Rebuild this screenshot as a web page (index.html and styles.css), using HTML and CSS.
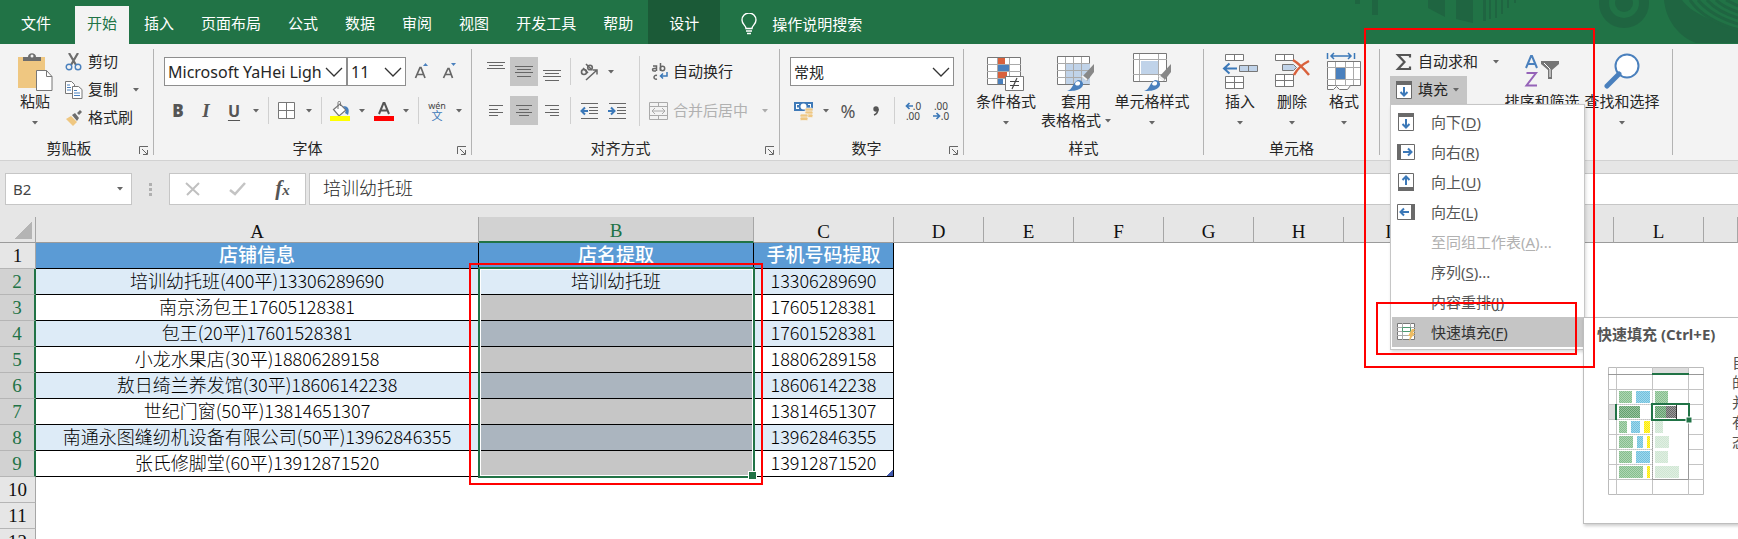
FILE: index.html
```html
<!DOCTYPE html>
<html lang="zh-CN">
<head>
    <meta charset="UTF-8">
    <meta name="viewport" content="width=device-width, initial-scale=1.0">
    <title>Excel</title>
    <link rel="stylesheet" href="styles.css">
</head>
<body>
    <!-- Общие значки -->
    <svg class="symbols" aria-hidden="true">
        <symbol id="caret" viewBox="0 0 6 4"><path d="M0 0h6L3 3.5z" fill="#666"/></symbol>
        <symbol id="chevron" viewBox="0 0 18 10"><path d="M1 1l8 8 8-8" fill="none" stroke="#333" stroke-width="1.3"/></symbol>
        <symbol id="launcher" viewBox="0 0 10 9"><path d="M.5 8V.5H9M3 3l5 5M8.5 4v4.5H4" fill="none" stroke="#666"/></symbol>
        <symbol id="fill-down" viewBox="0 0 18 18"><path d="M1.500 .5h15v17h-15z" fill="#fff" stroke="#6a6a6a"/><path d="M1 0h16v4H1z" fill="#6a6a6a"/><path d="M9 6v8M5.500 11L9 14.500l3.500-3.500" fill="none" stroke="#3b78b8" stroke-width="2"/></symbol>
    </svg>

    <header class="tabs">
        <svg class="tabs-art" viewBox="0 0 398 44" aria-hidden="true">
            <g fill="#1f6541">
                <path d="M15 0h5v4h-5zM32 0h6v15h-6zM88 0h17v17l-17-9zM116 0h17v23l-17-4zM143 0h3v21h-3zM149 0h2v19h-2zM155 0h2v18h-2zM161 0h2v14h-2zM167 0h2v8h-2zM174 0h2v3h-2z"/>
                <path d="M324 0c2 20 14 36 32 43h42V28C376 24 350 12 342 0z"/>
            </g>
            <circle cx="284" cy="3" r="20" fill="none" stroke="#1f6541" stroke-width="10"/>
            <circle cx="284" cy="3" r="9" fill="#1f6541"/>
            <path d="M350 0c10 15 28 24 48 30M358 0c10 12 24 19 40 24M367 0c8 9 18 14 31 18M376 0c6 6 13 9 22 12M386 0l12 6" fill="none" stroke="#1f6541" stroke-width="3"/>
        </svg>
        <nav class="tab-list">
            <button class="tab tab-file">文件</button>
            <button class="tab active">开始</button>
            <button class="tab">插入</button>
            <button class="tab">页面布局</button>
            <button class="tab">公式</button>
            <button class="tab">数据</button>
            <button class="tab">审阅</button>
            <button class="tab">视图</button>
            <button class="tab">开发工具</button>
            <button class="tab">帮助</button>
            <button class="tab tab-context">设计</button>
        </nav>
        <label class="tell-me">
            <svg width="16" height="22" viewBox="0 0 16 22"><path d="M5 15.500c0-3-4-4-4-8.500a7 7 0 0 1 14 0c0 4.500-4 5.500-4 8.500zM5 18h6M6 20.500h4" fill="none" stroke="#fff" stroke-width="1.400"/></svg>
            <input type="text" placeholder="操作说明搜索" aria-label="操作说明搜索">
        </label>
    </header>

    <section class="ribbon">
        <div class="group group-clipboard">
            <div class="group-body">
                <button class="big">
                    <svg width="36" height="40" viewBox="0 0 36 40"><path d="M1 5h27v31H1z" fill="#efc781"/><path d="M6 9V5h5c0-5 8-5 8 0h5v4z" fill="#6d6d6d"/><circle cx="15" cy="4" r="1.500" fill="#f3f3f3"/><path d="M19.500 18.500h10l5.500 6v14H19.500z" fill="#fff" stroke="#777"/><path d="M29.500 18.500v6H35" fill="none" stroke="#777"/></svg>
                    <span>粘贴</span>
                    <svg class="caret"><use href="#caret"/></svg>
                </button>
                <div class="stack">
                    <button class="small">
                        <svg width="18" height="18" viewBox="0 0 18 18"><path d="M4 0l7 12M13 0L6 12" stroke="#6d6d6d" stroke-width="2.200"/><circle cx="4" cy="14" r="2.800" fill="none" stroke="#4a80bd" stroke-width="1.400"/><circle cx="13" cy="14" r="2.800" fill="none" stroke="#4a80bd" stroke-width="1.400"/></svg>
                        <span>剪切</span>
                    </button>
                    <button class="small">
                        <svg width="18" height="18" viewBox="0 0 18 18"><path d="M.5.5h6l3 3v9h-9z" fill="#fff" stroke="#777"/><path d="M7.500 5.500h6l3.500 3v9H7.500z" fill="#fff" stroke="#777"/><path d="M2 4h3M2 6.500h4M2 9h4M9 9.500h3M9 12h6M9 14.500h6" stroke="#4a80bd"/></svg>
                        <span>复制</span>
                        <svg class="caret caret-far"><use href="#caret"/></svg>
                    </button>
                    <button class="small">
                        <svg width="18" height="18" viewBox="0 0 18 18"><path d="M1 10l5-3 6 6-4 4z" fill="#efc781"/><path d="M7 6l3-2 4 5-2 3zM12 4l3-3 2 2-3 3z" fill="#6d6d6d"/></svg>
                        <span>格式刷</span>
                    </button>
                </div>
            </div>
            <footer class="group-foot"><span>剪贴板</span><button class="launch" aria-label="剪贴板选项"><svg width="10" height="9"><use href="#launcher"/></svg></button></footer>
        </div>

        <div class="group group-font">
            <div class="group-body rows">
                <div class="row">
                    <label class="pick pick-font"><select aria-label="字体"><option>Microsoft YaHei Ligh</option></select><svg width="18" height="10"><use href="#chevron"/></svg></label>
                    <label class="pick pick-size"><select aria-label="字号"><option>11</option></select><svg width="18" height="10"><use href="#chevron"/></svg></label>
                    <button class="tool" aria-label="增大字号"><svg width="16" height="18" viewBox="0 0 16 18"><path d="M1.500 15L6 4.500h1L11 15M3 11.500h7" fill="none" stroke="#666" stroke-width="1.700"/><path d="M9 3l2.500-3L14 3z" fill="#4a80bd"/></svg></button>
                    <button class="tool" aria-label="减小字号"><svg width="16" height="18" viewBox="0 0 16 18"><path d="M1.500 15L6 5.500h1L10.500 15M3 11.500h6" fill="none" stroke="#666" stroke-width="1.700"/><path d="M9 0l2.500 3L14 0z" fill="#4a80bd"/></svg></button>
                </div>
                <div class="row">
                    <button class="tool letter"><b>B</b></button>
                    <button class="tool letter"><i>I</i></button>
                    <button class="tool letter"><u>U</u></button>
                    <button class="drop" aria-label="下划线"><svg class="caret"><use href="#caret"/></svg></button>
                    <span class="sep"></span>
                    <button class="tool" aria-label="边框"><svg width="18" height="18" viewBox="0 0 18 18"><path d="M.5.500h16v16H.5zM8.500.500v16M.5 8.500h16" fill="#fff" stroke="#777"/></svg></button>
                    <button class="drop" aria-label="边框样式"><svg class="caret"><use href="#caret"/></svg></button>
                    <span class="sep"></span>
                    <button class="tool" aria-label="填充颜色"><svg width="20" height="20" viewBox="0 0 20 20"><path d="M3.500 8.500L10 3l6 6-7 6z" fill="#fff" stroke="#777" stroke-width="1.200"/><path d="M8 8V1.500c0-1.500 2.500-1.500 2.500 0V5" fill="none" stroke="#777"/><path d="M13 5c5 0 7 3 5 9l-3-2 1-3z" fill="#4a80bd"/><path d="M0 15h20v5H0z" fill="#ff0"/></svg></button>
                    <button class="drop" aria-label="选择填充颜色"><svg class="caret"><use href="#caret"/></svg></button>
                    <button class="tool" aria-label="字体颜色"><svg width="20" height="20" viewBox="0 0 20 20"><path d="M5 13L9.500 2h1L15 13M6.500 9.500h7" fill="none" stroke="#555" stroke-width="2"/><path d="M0 15h20v5H0z" fill="red"/></svg></button>
                    <button class="drop" aria-label="选择字体颜色"><svg class="caret"><use href="#caret"/></svg></button>
                    <span class="sep"></span>
                    <button class="tool pinyin"><span>wén</span><span class="wen">文</span></button>
                    <button class="drop" aria-label="拼音设置"><svg class="caret"><use href="#caret"/></svg></button>
                </div>
            </div>
            <footer class="group-foot"><span>字体</span><button class="launch" aria-label="字体设置"><svg width="10" height="9"><use href="#launcher"/></svg></button></footer>
        </div>

        <div class="group group-align">
            <div class="group-body">
                <div class="rows">
                    <div class="row">
                        <button class="tool" aria-label="顶端对齐"><svg width="18" height="20" viewBox="0 0 18 20"><path d="M0 .5h18M2 3.500h14M0 6.500h18" stroke="#666"/></svg></button>
                        <button class="tool on" aria-label="垂直居中"><svg width="18" height="20" viewBox="0 0 18 20"><path d="M0 4.500h18M2 7.500h14M0 10.500h18M2 14.500h14" stroke="#666"/></svg></button>
                        <button class="tool" aria-label="底端对齐"><svg width="18" height="20" viewBox="0 0 18 20"><path d="M0 8.500h18M2 11.500h14M0 14.500h18M2 18.500h14" stroke="#666"/></svg></button>
                        <span class="sep"></span>
                        <button class="tool" aria-label="方向"><svg width="20" height="20" viewBox="0 0 20 20"><g fill="none" stroke="#666" stroke-width="1.600"><circle cx="5" cy="10" r="2.500"/><path d="M4 6l5 5M7 2l6 6"/><circle cx="11" cy="5.500" r="2.300"/></g><path d="M7 18L18 8M13.500 8H18v4.500" fill="none" stroke="#666" stroke-width="1.500"/></svg></button>
                        <button class="drop" aria-label="方向选项"><svg class="caret"><use href="#caret"/></svg></button>
                    </div>
                    <div class="row">
                        <button class="tool" aria-label="左对齐"><svg width="18" height="20" viewBox="0 0 18 20"><path d="M2 4.500h14M2 8.500h9M2 11.500h14M2 14.500h9" stroke="#666"/></svg></button>
                        <button class="tool on" aria-label="居中"><svg width="18" height="20" viewBox="0 0 18 20"><path d="M1 4.500h16M4 8.500h10M1 11.500h16M4 14.500h10" stroke="#666"/></svg></button>
                        <button class="tool" aria-label="右对齐"><svg width="18" height="20" viewBox="0 0 18 20"><path d="M2 4.500h14M7 8.500h9M2 11.500h14M7 14.500h9" stroke="#666"/></svg></button>
                        <span class="sep"></span>
                        <button class="tool" aria-label="减少缩进"><svg width="18" height="18" viewBox="0 0 18 18"><path d="M1 1.500h17M9 5.500h9M9 8.500h9M9 11.500h9M1 16.500h17" stroke="#666"/><path d="M8 9H2M5 5.500L1.500 9 5 12.500" fill="none" stroke="#3b78b8" stroke-width="2"/></svg></button>
                        <button class="tool" aria-label="增加缩进"><svg width="18" height="18" viewBox="0 0 18 18"><path d="M1 1.500h17M9 5.500h9M9 8.500h9M9 11.500h9M1 16.500h17" stroke="#666"/><path d="M0 9h6M3 5.500L6.500 9 3 12.500" fill="none" stroke="#3b78b8" stroke-width="2"/></svg></button>
                    </div>
                </div>
                <span class="sep sep-long"></span>
                <div class="rows rows-text">
                    <button class="small">
                        <svg width="20" height="20" viewBox="0 0 20 20"><g fill="none" stroke="#666" stroke-width="1.500"><path d="M4 4h3.500v5M7 6.500H5c-2 0-2 2.500 0 2.500h2M11.500 1v8M15.500 13"/><circle cx="13.500" cy="6.500" r="2.200"/><path d="M8 13.500c-4-1-4 4.500 0 3.500"/></g><path d="M18 10v4h-6M14 11.500L11.500 14l2.500 2.500" fill="none" stroke="#3b78b8" stroke-width="1.500"/></svg>
                        <span>自动换行</span>
                    </button>
                    <button class="small" disabled>
                        <svg width="20" height="20" viewBox="0 0 20 20"><path d="M.5 1.500h18v17H.5zM.5 5.500h18M.5 14.500h18M9.500 1.500v4M9.500 14.500v4M3 10h13M6 7l-3 3 3 3M13 7l3 3-3 3" fill="none" stroke="#aaa"/></svg>
                        <span>合并后居中</span>
                        <svg class="caret caret-far"><use href="#caret"/></svg>
                    </button>
                </div>
            </div>
            <footer class="group-foot"><span>对齐方式</span><button class="launch" aria-label="对齐设置"><svg width="10" height="9"><use href="#launcher"/></svg></button></footer>
        </div>

        <div class="group group-number">
            <div class="group-body rows">
                <div class="row">
                    <label class="pick pick-number"><select aria-label="数字格式"><option>常规</option></select><svg width="18" height="10"><use href="#chevron"/></svg></label>
                </div>
                <div class="row">
                    <button class="tool" aria-label="会计数字格式"><svg width="20" height="20" viewBox="0 0 20 20"><path d="M0 1h19v9H0z" fill="#3f7ab8"/><path d="M2 3h3v1H3v2.500h2V8H2zM17 3h-3v1h2v2.500h1z" fill="#fff"/><circle cx="9.500" cy="5.500" r="3" fill="#fff"/><g fill="#efc781" stroke="#f3f3f3" stroke-width=".7"><rect x="11" y="7" width="8" height="3.500" rx="1.500"/><rect x="11" y="10" width="8" height="3.500" rx="1.500"/><rect x="11" y="13" width="8" height="3.500" rx="1.500"/><rect x="6" y="13" width="8" height="3.500" rx="1.500"/><rect x="6" y="16" width="8" height="3.500" rx="1.500"/></g></svg></button>
                    <button class="drop" aria-label="货币"><svg class="caret"><use href="#caret"/></svg></button>
                    <button class="tool percent">%</button>
                    <button class="tool comma" aria-label="千位分隔样式"><svg width="8" height="10" viewBox="0 0 8 10"><circle cx="4" cy="3" r="2.700" fill="#555"/><path d="M6 3c0 3-1 5-4 6" fill="none" stroke="#555" stroke-width="1.600"/></svg></button>
                    <span class="sep"></span>
                    <button class="tool decimals"><span><svg width="8" height="8" viewBox="0 0 8 8"><path d="M8 4H2M4.500 1l-3 3 3 3" fill="none" stroke="#3b78b8" stroke-width="1.700"/></svg>.0</span><span>.00</span></button>
                    <button class="tool decimals"><span>.00</span><span><svg width="8" height="8" viewBox="0 0 8 8"><path d="M0 4h6M3.500 1l3 3-3 3" fill="none" stroke="#3b78b8" stroke-width="1.700"/></svg>.0</span></button>
                </div>
            </div>
            <footer class="group-foot"><span>数字</span><button class="launch" aria-label="数字设置"><svg width="10" height="9"><use href="#launcher"/></svg></button></footer>
        </div>

        <div class="group group-styles">
            <div class="group-body">
                <button class="big">
                    <svg width="38" height="40" viewBox="0 0 38 40"><path d="M.5 5.500h33v27H.5z" fill="#fff" stroke="#777"/><path d="M0 12.500h34M0 19.500h34M0 26.500h34M10.500 6v26M22.500 6v26" stroke="#aaa"/><path d="M11 6h7v6h-7zM11 20h9v6h-9z" fill="#d9613c"/><path d="M11 13h11v6H11zM11 27h5v5h-5z" fill="#4a80bd"/><path d="M18.500 24.500h18v14h-18z" fill="#fff" stroke="#777"/><path d="M23 29.500h9M23 33.500h9M30 26l-5 11" stroke="#444" stroke-width="1.200"/></svg>
                    <span>条件格式</span>
                    <svg class="caret"><use href="#caret"/></svg>
                </button>
                <button class="big">
                    <svg width="38" height="40" viewBox="0 0 38 40"><path d="M.5 4.500h32v28H.5z" fill="#fff" stroke="#777"/><path d="M9 12h24v20H9z" fill="#c0d3e9"/><path d="M0 11.500h33M0 18.500h33M0 25.500h33M8.500 5v27M16.500 5v27M24.500 5v27" stroke="#aaa"/><path d="M37 12v8l-7 9-5-4z" fill="#888"/><path d="M25 24l5 4" stroke="#f3f3f3" stroke-width="2"/><path d="M10 39c6-1 5-8 11-11 5 0 7 5 3 8-4 3-9 3-14 3z" fill="#4a80bd"/><path d="M18 32c1-4 6-3 5 0-1 2-4 2-5 0z" fill="#fff"/></svg>
                    <span>套用</span>
                    <span class="with-caret">表格格式<svg class="caret"><use href="#caret"/></svg></span>
                </button>
                <button class="big">
                    <svg width="38" height="40" viewBox="0 0 38 40"><path d="M.5 1.500h33v28H.5z" fill="#fff" stroke="#777"/><path d="M0 7.500h34M0 22.500h34M6.500 2v27M25.500 2v27" stroke="#aaa"/><path d="M8 9h17v13H8z" fill="#c0d3e9"/><path d="M38 12v8l-7 9-5-4z" fill="#888"/><path d="M26 24l5 4" stroke="#f3f3f3" stroke-width="2"/><path d="M11 39c6-1 5-8 11-11 5 0 7 5 3 8-4 3-9 3-14 3z" fill="#4a80bd"/><path d="M19 32c1-4 6-3 5 0-1 2-4 2-5 0z" fill="#fff"/></svg>
                    <span>单元格样式</span>
                    <svg class="caret"><use href="#caret"/></svg>
                </button>
            </div>
            <footer class="group-foot"><span>样式</span></footer>
        </div>

        <div class="group group-cells">
            <div class="group-body">
                <button class="big">
                    <svg width="36" height="40" viewBox="0 0 36 40"><path d="M3.500 2.500h18v6h-18zM12.500 2.500v6M3.500 24.500h18v12h-18zM3.500 30.500h18M12.500 24.500v12" fill="#fff" stroke="#777"/><path d="M17.500 13.500h18v6h-18zM26.500 13.500v6" fill="#c0d3e9" stroke="#777"/><path d="M15 16.500H2M7.500 11.500l-5.500 5 5.500 5" fill="none" stroke="#3b78b8" stroke-width="2"/></svg>
                    <span>插入</span>
                    <svg class="caret"><use href="#caret"/></svg>
                </button>
                <button class="big">
                    <svg width="36" height="40" viewBox="0 0 36 40"><path d="M1.500 2.500h18v6h-18zM10.500 2.500v6M1.500 22.500h18v12h-18zM1.500 28.500h18M10.500 22.500v12" fill="#fff" stroke="#777"/><path d="M8.500 12.500h11l3 3-3 3h-11z" fill="#c0d3e9" stroke="#777"/><path d="M19 8c5 3 11 9 16 15M35 9c-6 3-12 8-15 14" fill="none" stroke="#d9613c" stroke-width="2.500"/></svg>
                    <span>删除</span>
                    <svg class="caret"><use href="#caret"/></svg>
                </button>
                <button class="big">
                    <svg width="36" height="40" viewBox="0 0 36 40"><path d="M1.500 1v6M28.500 1v6M5 4h20M8 1L5 4l3 3M22 1l3 3-3 3" fill="none" stroke="#3b78b8" stroke-width="1.500"/><path d="M1.500 9.500h33v24h-33z" fill="#fff" stroke="#777"/><path d="M1 15.500h33M1 27.500h33M9.500 10v23M19.500 10v23M27.500 10v23" stroke="#aaa"/><path d="M10 16h9v11h-9z" fill="#4a80bd"/><path d="M1.500 34v3.500h6l3-3 3 3h8l3-4" fill="#fff" stroke="#777"/></svg>
                    <span>格式</span>
                    <svg class="caret"><use href="#caret"/></svg>
                </button>
            </div>
            <footer class="group-foot"><span>单元格</span></footer>
        </div>

        <div class="group group-edit">
            <div class="group-body">
                <div class="stack">
                    <button class="small">
                        <svg width="18" height="18" viewBox="0 0 18 18"><path d="M15 4.500V2H3l6.500 7L3 16h12v-2.500" fill="none" stroke="#555" stroke-width="2.200"/></svg>
                        <span>自动求和</span>
                        <svg class="caret caret-far"><use href="#caret"/></svg>
                    </button>
                    <div class="fill">
                        <button class="small on">
                            <svg width="18" height="18"><use href="#fill-down"/></svg>
                            <span>填充</span>
                            <svg class="caret"><use href="#caret"/></svg>
                        </button>
                        <div class="menu" role="menu">
                            <button class="item" role="menuitem"><svg width="18" height="18"><use href="#fill-down"/></svg><span>向下(<u>D</u>)</span></button>
                            <button class="item" role="menuitem"><svg width="18" height="18"><use href="#fill-down" transform="rotate(-90 9 9)"/></svg><span>向右(<u>R</u>)</span></button>
                            <button class="item" role="menuitem"><svg width="18" height="18"><use href="#fill-down" transform="rotate(180 9 9)"/></svg><span>向上(<u>U</u>)</span></button>
                            <button class="item" role="menuitem"><svg width="18" height="18"><use href="#fill-down" transform="rotate(90 9 9)"/></svg><span>向左(<u>L</u>)</span></button>
                            <button class="item" role="menuitem" disabled><span>至同组工作表(<u>A</u>)...</span></button>
                            <button class="item" role="menuitem"><span>序列(<u>S</u>)...</span></button>
                            <button class="item" role="menuitem"><span>内容重排(<u>J</u>)</span></button>
                            <button class="item on" role="menuitem"><svg width="18" height="18" viewBox="0 0 18 18"><path d="M.5.500h17v16H.5z" fill="#fff" stroke="#777"/><path d="M0 4.500h18M0 12.500h18M5.500 0v17M13.500 0v17M0 8.500h18" stroke="#aaa"/><path d="M5.500 4.500h8v4h-8z" fill="#fff" stroke="#4e9a72"/><path d="M15 6h3l-2 4h2l-6 8 1-5h-2z" fill="#eebc62"/></svg><span>快速填充(<u>F</u>)</span></button>
                            <div class="tip" role="tooltip">
                                <strong>快速填充 (Ctrl+E)</strong>
                                <div class="tip-body">
                                    <svg width="96" height="128" viewBox="0 0 96 128">
                                        <defs><pattern id="dots" width="2" height="2" patternUnits="userSpaceOnUse"><path d="M0 0h1v1H0zM1 1h1v1H1z" fill="#fff" fill-opacity=".35"/></pattern></defs>
                                        <path d="M.5.500h95v127H.5z" fill="#fff" stroke="#bbb"/>
                                        <path d="M44 1h37v5H44zM1 38h6v14H1z" fill="#ddd"/>
                                        <path d="M8.500 0v128M44.500 0v128M80.500 0v128M0 22.500h96M0 37.500h96M0 52.500h96M0 67.500h96M0 82.500h96M0 97.500h96M0 112.500h96" stroke="#c4c4c4"/>
                                        <path d="M0 7.500h96" stroke="#999"/>
                                        <path d="M45 38h35v74H45z" fill="#fff"/>
                                        <path d="M44.500 53v59.500h36V53" fill="none" stroke="#999"/>
                                        <path d="M11 24h13v12H11zM47 24h13v12H47zM11 54h8v12h-8zM11 69h14v12H11zM11 84h13v12H11zM11 99h24v12H11z" fill="#85bf8d"/>
                                        <path d="M11 39h21v12H11zM47 39h11v12H47z" fill="#62a16d"/>
                                        <path d="M28 24h14v12H28zM23 54h9v12h-9zM29 69h6v12h-6zM28 84h14v12H28z" fill="#6fc1df"/>
                                        <path d="M36 54h6v12h-6zM39 69h3v12h-3zM39 99h3v12h-3z" fill="#ffed00"/>
                                        <path d="M47 54h8v12h-8zM47 69h14v12H47zM47 84h13v12H47zM47 99h24v12H47z" fill="#cfe6d3"/>
                                        <path d="M58 39h10v12H58z" fill="#666"/>
                                        <path d="M11 24h60v87H11z" fill="url(#dots)"/>
                                        <path d="M68.500 38v14" stroke="#333"/>
                                        <path d="M44 37h37v16H44z" fill="none" stroke="#217346" stroke-width="2"/>
                                        <path d="M44 7h37M8 37v16" stroke="#217346" stroke-width="2"/>
                                        <path d="M78 50h6v6h-6z" fill="#217346" stroke="#fff"/>
                                    </svg>
                                    <p>自<br>的<br>并<br>有<br>态</p>
                                </div>
                            </div>
                        </div>
                    </div>
                </div>
                <button class="big">
                    <svg width="36" height="40" viewBox="0 0 36 40"><path d="M2 16L7 4h1l5 12M4 12h7" fill="none" stroke="#4a80bd" stroke-width="2"/><path d="M2.500 21H12L2.500 33.500H13" fill="none" stroke="#9563b8" stroke-width="2"/><path d="M17 9h18v3l-7 6v9h-4v-9l-7-6z" fill="#757575"/><path d="M20 11l6 6v8" fill="none" stroke="#fff"/></svg>
                    <span>排序和筛选</span>
                    <svg class="caret"><use href="#caret"/></svg>
                </button>
                <button class="big">
                    <svg width="36" height="40" viewBox="0 0 36 40"><circle cx="23" cy="14" r="11.500" fill="#fff" stroke="#4a80bd" stroke-width="2"/><path d="M15 22L3 34" stroke="#4a80bd" stroke-width="5" stroke-linecap="round"/></svg>
                    <span>查找和选择</span>
                    <svg class="caret"><use href="#caret"/></svg>
                </button>
            </div>
        </div>
        <div class="mark mark-menu"></div>
        <div class="mark mark-item"></div>
    </section>

    <section class="formula-bar">
        <label class="name-box"><input type="text" value="B2" aria-label="名称框"><svg class="caret"><use href="#caret"/></svg></label>
        <svg class="grip" width="3" height="13" viewBox="0 0 3 13"><path d="M0 0h3v3H0zM0 5h3v3H0zM0 10h3v3H0z" fill="#b0b0b0"/></svg>
        <div class="formula-tools">
            <button aria-label="取消"><svg width="16" height="14" viewBox="0 0 16 14"><path d="M1 1l13 12M14 1L2 13" stroke="#c0c0c0" stroke-width="2"/></svg></button>
            <button aria-label="输入"><svg width="18" height="14" viewBox="0 0 18 14"><path d="M1 8l5 4L16 1" fill="none" stroke="#c4c4c4" stroke-width="2.500"/></svg></button>
            <button class="fx"><i>f<small>x</small></i></button>
        </div>
        <input class="formula" type="text" value="培训幼托班" aria-label="编辑栏">
    </section>

    <main class="sheet">
        <table>
            <colgroup>
                <col class="col-head"><col class="col-a"><col class="col-b"><col class="col-c">
                <col class="col-n" span="9"><col>
            </colgroup>
            <thead>
                <tr><th class="corner"></th><th>A</th><th class="sel">B</th><th>C</th><th>D</th><th>E</th><th>F</th><th>G</th><th>H</th><th>I</th><th>J</th><th>K</th><th>L</th><th></th></tr>
            </thead>
            <tbody>
                <tr class="title"><th>1</th><td>店铺信息</td><td>店名提取</td><td>手机号码提取</td></tr>
                <tr class="band"><th class="sel">2</th><td>培训幼托班(400平)13306289690</td><td class="first">培训幼托班<div class="selection"></div><div class="mark mark-cells"></div></td><td>13306289690</td></tr>
                <tr><th class="sel">3</th><td>南京汤包王17605128381</td><td class="picked"></td><td>17605128381</td></tr>
                <tr class="band"><th class="sel">4</th><td>包王(20平)17601528381</td><td class="picked"></td><td>17601528381</td></tr>
                <tr><th class="sel">5</th><td>小龙水果店(30平)18806289158</td><td class="picked"></td><td>18806289158</td></tr>
                <tr class="band"><th class="sel">6</th><td>敖日绮兰养发馆(30平)18606142238</td><td class="picked"></td><td>18606142238</td></tr>
                <tr><th class="sel">7</th><td>世纪门窗(50平)13814651307</td><td class="picked"></td><td>13814651307</td></tr>
                <tr class="band"><th class="sel">8</th><td>南通永图缝纫机设备有限公司(50平)13962846355</td><td class="picked"></td><td>13962846355</td></tr>
                <tr><th class="sel">9</th><td>张氏修脚堂(60平)13912871520</td><td class="picked"></td><td class="last">13912871520</td></tr>
                <tr><th>10</th></tr>
                <tr><th>11</th></tr>
                <tr><th>12</th></tr>
            </tbody>
        </table>
    </main>
</body>
</html>
```

FILE: styles.css
```css
* {
    box-sizing: border-box;
}
html {
    overflow: hidden;
}
body {
    margin: 0;
    height: 100vh;
    display: flex;
    flex-direction: column;
    overflow: hidden;
    background-color: #fff;
    color: #262626;
    font-family: "Noto Sans", "Noto Sans CJK SC", sans-serif;
    font-size: 15px;
    line-height: 20px;
}
button, input, select {
    font: inherit;
    color: inherit;
    border: none;
    padding: 0;
    margin: 0;
    background: none;
    white-space: nowrap;
}
svg {
    display: block;
    flex: none;
}
.symbols {
    position: absolute;
    width: 0;
    height: 0;
}
.caret {
    width: 6px;
    height: 4px;
}

/* Вкладки */
.tabs {
    position: relative;
    flex: none;
    display: flex;
    height: 44px;
    background-color: #217346;
    color: #fff;
}
.tabs-art {
    position: absolute;
    top: 0;
    right: 0;
    width: 398px;
    height: 44px;
}
.tab-list {
    display: flex;
    align-items: flex-end;
    gap: 3px;
    padding-left: 9px;
}
.tab {
    height: 38px;
    padding: 0 12px 4px;
}
.tab-file {
    margin-right: 9px;
}
.tab.active {
    background-color: #f3f3f3;
    color: #217346;
}
.tab-context {
    height: 44px;
    padding: 2px 21px 0;
    background-color: #1b5a37;
}
.tell-me {
    display: flex;
    align-items: center;
    gap: 15px;
    padding: 4px 0 0 21px;
}
.tell-me input::placeholder {
    color: #fff;
    opacity: 1;
}

/* Лента */
.ribbon {
    position: relative;
    z-index: 2;
    flex: none;
    display: flex;
    height: 117px;
    padding: 5px 0;
    background-color: #f3f3f3;
    border-bottom: 1px solid #d2d2d2;
}
.group {
    flex: none;
    display: flex;
    flex-direction: column;
    border-right: 1px solid #b3b3b3;
}
.group-clipboard {
    width: 154px;
    padding-left: 5px;
}
.group-font {
    width: 318px;
    padding-left: 10px;
}
.group-align {
    width: 308px;
    padding-left: 10px;
}
.group-number {
    width: 184px;
    padding-left: 10px;
}
.group-styles {
    width: 240px;
}
.group-cells {
    width: 176px;
}
.group-edit {
    width: 293px;
    padding-left: 10px;
}
.group-body {
    flex: 1;
    display: flex;
    min-height: 0;
}
.group-foot {
    display: flex;
    align-items: center;
    height: 16px;
    padding-top: 1px;
    text-align: center;
}
.group-foot span {
    flex: 1;
}
.launch {
    width: 20px;
    height: 16px;
    padding: 5px 0 0 6px;
}
.stack {
    display: flex;
    flex-direction: column;
    margin-top: -1px;
}
.small {
    display: flex;
    align-items: center;
    gap: 5px;
    height: 28px;
}
.small span {
    padding-bottom: 2px;
}
.caret-far {
    margin-left: 10px;
}
.small:disabled {
    color: #b1b1b1;
}
.small:disabled .caret {
    opacity: 0.5;
}
.on {
    background-color: #c5c5c5;
}
.big {
    display: flex;
    flex-direction: column;
    align-items: center;
    padding-top: 3px;
    line-height: 19px;
}
.big > .caret {
    margin-top: 10px;
}
.with-caret {
    display: flex;
    align-items: center;
    gap: 4px;
}
.group-clipboard .big {
    width: 60px;
}
.group-styles .group-body {
    padding-left: 9px;
}
.group-styles .big {
    width: 78px;
}
.group-styles .big:first-child {
    width: 66px;
}
.group-styles .big:nth-child(2) {
    width: 74px;
}
.group-cells .group-body {
    padding-left: 10px;
}
.group-cells .big {
    width: 52px;
}
.group-edit .big {
    width: 80px;
}
.group-edit .stack {
    width: 112px;
}
.group-edit .small {
    padding-left: 5px;
}
.rows {
    display: flex;
    flex-direction: column;
    gap: 10px;
    padding-top: 8px;
}
.row {
    display: flex;
    align-items: center;
    height: 29px;
}
.rows-text {
    padding-left: 5px;
}
.rows-text .small {
    gap: 4px;
    height: 29px;
}
.tool {
    display: flex;
    align-items: center;
    justify-content: center;
    width: 28px;
    height: 29px;
}
.drop {
    display: flex;
    align-items: center;
    justify-content: center;
    width: 16px;
    height: 29px;
}
.sep {
    width: 1px;
    height: 27px;
    margin: 0 4px;
    background-color: #d0d0d0;
}
.sep-long {
    height: 70px;
    margin: 7px 4px 0 8px;
}
.letter {
    color: #555;
    font-size: 17px;
    font-weight: bold;
}
.letter i {
    font-family: "Liberation Serif", serif;
    font-size: 19px;
}
.letter u {
    font-size: 16px;
    text-underline-offset: 3px;
    text-decoration-thickness: 1px;
}
.pinyin {
    flex-direction: column;
    font-size: 9px;
    line-height: 9px;
    color: #444;
}
.pinyin .wen {
    font-size: 11px;
    line-height: 11px;
    color: #3b78b8;
}
.percent {
    font-size: 18px;
    color: #555;
}
.decimals {
    flex-direction: column;
    align-items: center;
    font-size: 10px;
    line-height: 10px;
    color: #444;
}
.decimals span {
    display: flex;
    align-items: center;
}
.pick {
    position: relative;
    display: block;
    height: 29px;
}
.pick select {
    appearance: none;
    width: 100%;
    height: 29px;
    padding: 0 3px;
    border: 1px solid #8e8e8e;
    background-color: #fff;
}
.pick svg {
    position: absolute;
    top: 10px;
    right: 4px;
    pointer-events: none;
}
.pick-font {
    width: 183px;
    font-size: 16px;
}
.pick-size {
    width: 59px;
    margin-right: 2px;
    font-size: 16px;
}
.pick-number {
    width: 164px;
}

/* Меню заполнения */
.fill {
    position: relative;
}
.fill > .small {
    width: 77px;
}
.menu {
    position: absolute;
    z-index: 3;
    top: 100%;
    left: 0;
    width: 195px;
    padding: 2px 1px;
    background-color: #fff;
    border: 1px solid #c6c6c6;
    box-shadow: 1px 2px 3px rgba(0, 0, 0, 0.15);
}
.item {
    display: grid;
    grid-template-columns: 34px 1fr;
    align-items: center;
    width: 100%;
    height: 30px;
    padding-left: 5px;
    color: #555;
    text-align: left;
}
.item span {
    grid-column: 2;
}
.item u {
    text-underline-offset: 2px;
}
.item:disabled {
    color: #b1b1b1;
}
.item.on {
    color: #333;
}
.tip {
    position: absolute;
    top: 212px;
    left: 192px;
    width: 320px;
    height: 207px;
    padding: 6px 13px;
    background-color: #fff;
    border: 1px solid #bebebe;
    box-shadow: 1px 2px 3px rgba(0, 0, 0, 0.2);
    color: #555;
}
.tip-body {
    display: flex;
    align-items: flex-start;
    gap: 28px;
    padding: 23px 0 0 11px;
}
.tip p {
    margin: -15px 0 0;
}

/* Красные рамки */
.mark {
    position: absolute;
    z-index: 4;
    border: 2px solid #f00;
    pointer-events: none;
}
.mark-menu {
    top: -16px;
    left: 1364px;
    width: 231px;
    height: 340px;
}
.mark-item {
    top: 258px;
    left: 1376px;
    width: 201px;
    height: 53px;
}
.mark-cells {
    top: -6px;
    left: -10px;
    width: 294px;
    height: 222px;
}

/* Строка формул */
.formula-bar {
    flex: none;
    display: flex;
    align-items: center;
    height: 56px;
    padding: 0 0 0 5px;
    background-color: #e6e6e6;
}
.name-box, .formula-tools, .formula {
    height: 32px;
    background-color: #fff;
    border: 1px solid #c6c6c6;
}
.name-box {
    display: flex;
    align-items: center;
    width: 127px;
    padding: 0 8px 0 7px;
    color: #444;
}
.name-box input {
    flex: 1;
    min-width: 0;
}
.grip {
    margin: 0 17px;
}
.formula-tools {
    display: flex;
    align-items: center;
    width: 137px;
    margin-right: 3px;
}
.formula-tools button {
    flex: 1;
    display: flex;
    justify-content: center;
}
.formula-tools .fx {
    color: #555;
    font-family: "Liberation Serif", serif;
    font-size: 21px;
    font-weight: bold;
}
.fx small {
    font-size: 15px;
}
.formula {
    flex: 1;
    min-width: 0;
    padding: 0 13px 5px;
    border-right: none;
    font-family: "Noto Sans CJK SC", sans-serif;
    font-size: 18px;
    font-weight: 300;
}

/* Таблица */
.sheet {
    flex: 1;
    min-height: 0;
    overflow: hidden;
}
table {
    width: 100%;
    table-layout: fixed;
    border-collapse: separate;
    border-spacing: 0;
}
.col-head {
    width: 36px;
}
.col-a {
    width: 443px;
}
.col-b {
    width: 275px;
}
.col-c {
    width: 140px;
}
.col-n {
    width: 90px;
}
tr {
    height: 26px;
}
th, td {
    height: 26px;
    padding: 0;
    line-height: 24px;
    text-align: center;
    white-space: nowrap;
}
th {
    background-color: #e6e6e6;
    border-right: 1px solid #a6a6a6;
    border-bottom: 1px solid #b5b5b5;
    color: #111;
    font-family: "Liberation Serif", serif;
    font-size: 19px;
    font-weight: normal;
}
thead th {
    border-bottom-color: #9b9b9b;
    padding-top: 3px;
    line-height: 21px;
}
th.corner {
    background-image: linear-gradient(135deg, transparent 50%, #b4b4b4 50%);
    background-size: 18px 18px;
    background-repeat: no-repeat;
    background-position: 14px 4px;
}
th.sel {
    background-color: #d2d2d2;
    color: #217346;
}
thead th.sel {
    border-bottom: 2px solid #217346;
}
tbody th.sel {
    border-right: 2px solid #217346;
}
td {
    background-color: #fff;
    border-right: 1px solid #000;
    border-bottom: 1px solid #000;
    color: #000;
    font-family: "Noto Sans CJK SC", sans-serif;
    font-size: 18px;
    font-weight: 300;
    line-height: 22px;
    vertical-align: top;
}
.title td {
    background-color: #5b9bd5;
    color: #fff;
    font-size: 19px;
    font-weight: 500;
}
.band td {
    background-color: #ddebf7;
}
td.picked {
    background-color: #c6c6c6;
}
.band td.picked {
    background-color: #abb5bf;
}
.first {
    position: relative;
}
.selection {
    position: absolute;
    z-index: 1;
    top: -2px;
    left: -1px;
    width: 277px;
    height: 211px;
    border: 2px solid #217346;
    box-shadow: inset 0 0 0 1px #fff;
}
.selection::after {
    content: "";
    position: absolute;
    right: -4px;
    bottom: -4px;
    width: 7px;
    height: 7px;
    background-color: #217346;
    border: 1px solid #fff;
}
td.last {
    background-image: linear-gradient(135deg, transparent 50%, #4059ad 50%);
    background-size: 7px 7px;
    background-repeat: no-repeat;
    background-position: right bottom;
}
```
